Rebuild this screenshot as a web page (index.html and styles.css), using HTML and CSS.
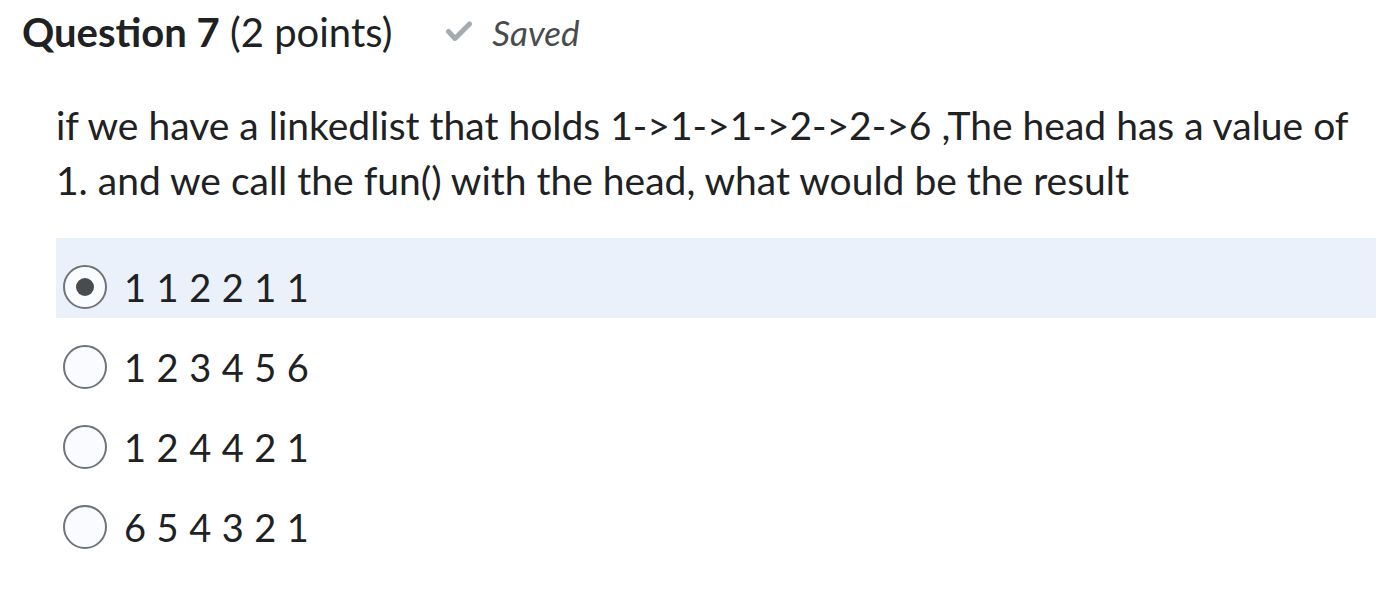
FILE: index.html
```html
<!DOCTYPE html>
<html>
<head>
<meta charset="utf-8">
<link rel="stylesheet" href="styles.css">
</head>
<body>
<div class="page">
  <div class="header">
    <h2 class="title"><strong>Question 7</strong> <span class="pts">(2 points)</span></h2>
    <div class="saved">
      <svg class="check" viewBox="0 0 28 22" width="28" height="22"><path d="M3.5 11.5 L10 18.5 L24.5 4" fill="none" stroke="#a5acb0" stroke-width="5" stroke-linecap="round" stroke-linejoin="round"/></svg>
      <span>Saved</span>
    </div>
  </div>
  <div class="question">
    <p class="qtext">if we have a linkedlist that holds 1-&gt;1-&gt;1-&gt;2-&gt;2-&gt;6 ,The head has a value of 1. and we call the fun() with the head, what would be the result</p>
    <div class="options">
      <label class="option selected"><span class="radio checked"></span><span class="opt-text">1 1 2 2 1 1</span></label>
      <label class="option"><span class="radio"></span><span class="opt-text">1 2 3 4 5 6</span></label>
      <label class="option"><span class="radio"></span><span class="opt-text">1 2 4 4 2 1</span></label>
      <label class="option"><span class="radio"></span><span class="opt-text">6 5 4 3 2 1</span></label>
    </div>
  </div>
</div>
</body>
</html>
```
FILE: styles.css
```css
html, body { margin: 0; padding: 0; background: #fff; }
body { font-family: Lato, "Noto Sans", sans-serif; color: #202122; }
.page { padding: 10px 6px 0 22px; }
.header { display: flex; align-items: center; height: 44px; }
.title { margin: 0; font-size: 40px; font-weight: 400; }
.title strong { font-weight: 700; }
.saved { display: flex; align-items: center; margin-left: 53px; color: #494c4e; font-style: italic; font-size: 35px; }
.saved .check { margin-right: 19px; margin-bottom: 2px; }
.question { padding-left: 34px; margin-top: 44px; }
.qtext { margin: 0; font-size: 39px; line-height: 55px; }
.options { margin-top: 30px; }
.option { display: flex; align-items: center; height: 80px; padding: 18px 0 0 7px; box-sizing: border-box; }
.option.selected { background: #eaf1fb; }
.radio { width: 40px; height: 40px; border: 2px solid #6e7477; border-radius: 50%; background: #f9fbff; display: flex; align-items: center; justify-content: center; flex-shrink: 0; }
.radio.checked::after { content: ""; width: 18px; height: 18px; border-radius: 50%; background: #494c4e; }
.opt-text { margin-left: 17px; font-size: 38px; letter-spacing: 0.4px; }
```
